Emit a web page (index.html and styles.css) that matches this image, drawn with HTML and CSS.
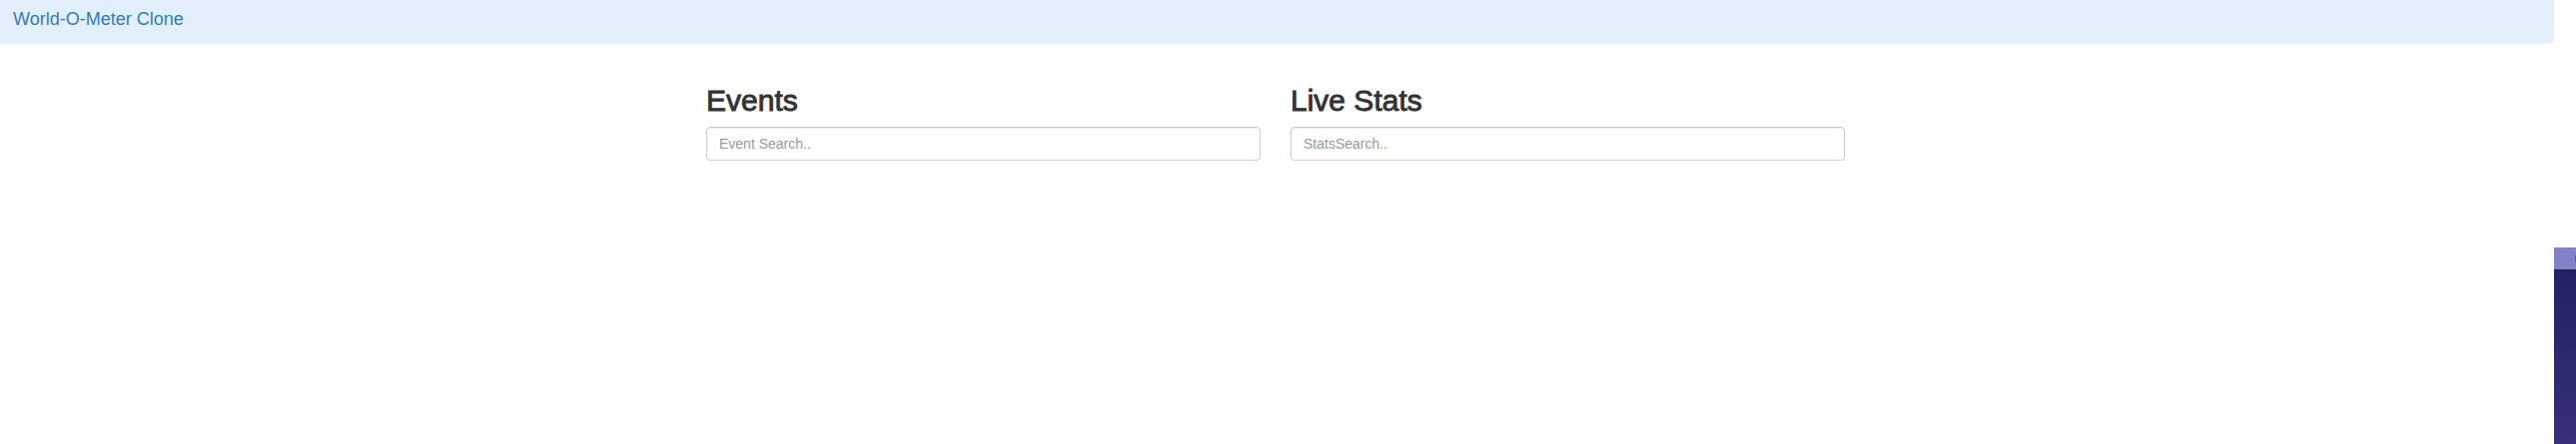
FILE: index.html
```html
<!DOCTYPE html>
<html lang="en">
<head>
<meta charset="utf-8">
<title>World-O-Meter Clone</title>
<link rel="stylesheet" href="styles.css">
</head>
<body>
<div class="page">
  <div class="app">
    <nav class="navbar">
      <a class="brand" href="#">World-O-Meter Clone</a>
    </nav>
    <div class="content">
      <div class="container">
        <div class="row">
          <section class="col">
            <h2>Events</h2>
            <input class="form-control" type="text" placeholder="Event Search..">
          </section>
          <section class="col">
            <h2>Live Stats</h2>
            <input class="form-control" type="text" placeholder="StatsSearch..">
          </section>
        </div>
      </div>
    </div>
  </div>
  <aside class="side">
    <div class="widget">
      <div class="widget-head"><span class="widget-mark"></span></div>
      <div class="widget-body"></div>
    </div>
  </aside>
</div>
</body>
</html>
```

FILE: styles.css
```css
html, body {
  margin: 0;
  padding: 0;
  background: #fff;
}
body {
  font-family: "Liberation Sans", Arial, sans-serif;
  font-size: 14px;
  line-height: 1.42857;
  color: #333;
}
.page {
  display: flex;
  width: 2579px;
  height: 445px;
  overflow: hidden;
}
.app {
  flex: 1;
  min-width: 0;
}
.navbar {
  height: 44px;
  background: #e3f0fc;
  border-bottom-right-radius: 4px;
  display: flex;
  align-items: center;
  padding-left: 13px;
  box-sizing: border-box;
}
.brand {
  font-size: 18px;
  line-height: 20px;
  color: #337ab7;
  text-decoration: none;
  margin-top: -7px;
}
.content {
  padding-right: 3px;
}
.container {
  width: 1170px;
  margin: 0 auto;
  padding: 20px 15px 0;
  box-sizing: border-box;
}
.row {
  display: flex;
  margin: 0 -15px;
}
.col {
  flex: 0 0 50%;
  padding: 0 15px;
  box-sizing: border-box;
}
h2 {
  margin: 20px 0 10px;
  font-size: 30px;
  line-height: 33px;
  font-weight: 500;
  color: #333;
  -webkit-text-stroke: 0.9px #333;
}
.form-control {
  display: block;
  width: 100%;
  height: 34px;
  padding: 6px 12px;
  box-sizing: border-box;
  font-family: "Liberation Sans", Arial, sans-serif;
  font-size: 14px;
  color: #555;
  background: #fff;
  border: 1px solid #ccc;
  border-radius: 4px;
  box-shadow: inset 0 1px 1px rgba(0, 0, 0, 0.075);
  outline: none;
}
.form-control::placeholder {
  color: #999;
}
.side {
  flex: 0 0 22px;
  padding-top: 248px;
  box-sizing: border-box;
}
.widget {
  height: 197px;
  display: flex;
  flex-direction: column;
}
.widget-head {
  height: 22px;
  background: #8282c9;
  display: flex;
  justify-content: flex-end;
  align-items: flex-start;
}
.widget-mark {
  width: 1px;
  height: 7px;
  margin-top: 8px;
  background: #5a5aa8;
}
.widget-body {
  flex: 1;
  background: linear-gradient(#222263, #2c2a70 50%, #37307b);
}
```
